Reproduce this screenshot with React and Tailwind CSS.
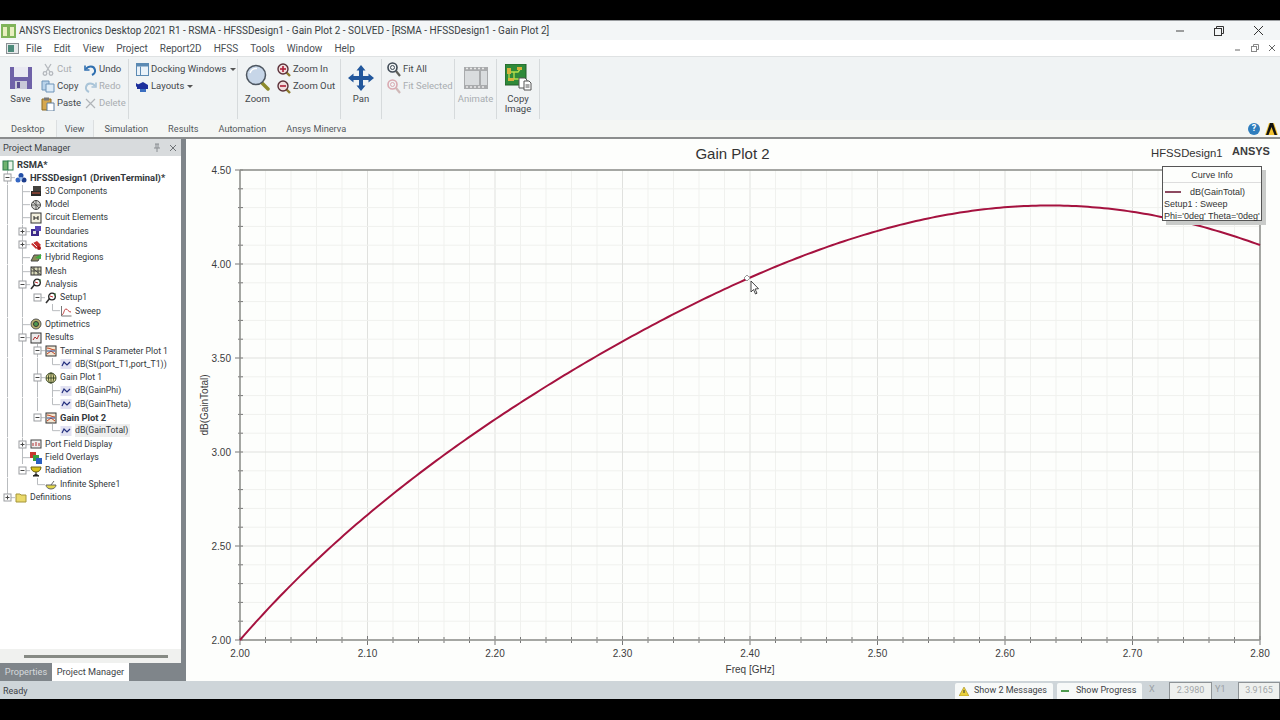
import { Fragment } from "react"

const ui = "font-['Roboto','Noto_Sans',sans-serif]"

// ---------- ribbon icons ----------
const SaveIcon = () => (
  <svg width="24" height="24" viewBox="0 0 24 24">
    <path d="M1 1h22v22H1z" fill="#6f62a8" />
    <rect x="5" y="1" width="14" height="10" fill="#e9e9f2" />
    <rect x="6" y="15" width="12" height="8" fill="#c9c9d8" />
    <rect x="8" y="16" width="3" height="6" fill="#5b4f90" />
  </svg>
)
const CutIcon = () => (
  <svg width="12" height="13" viewBox="0 0 12 13" fill="none" stroke="#b4b8bd" strokeWidth="1.3">
    <path d="M3 1l5 8M9 1L4 9" />
    <circle cx="3" cy="10.5" r="1.8" />
    <circle cx="9" cy="10.5" r="1.8" />
  </svg>
)
const UndoIcon = ({ off }) => (
  <svg width="13" height="12" viewBox="0 0 13 12" fill="none" stroke={off ? "#a9c4d8" : "#2f6fb0"} strokeWidth="2">
    <path d="M2 5c2-3 8-4 9 1 .4 2-1 4-3 5" />
    <path d="M1 1.5v4.5h4.500" strokeWidth="1.600" />
  </svg>
)
const RedoIcon = () => (
  <svg width="13" height="12" viewBox="0 0 13 12" fill="none" stroke="#a9c4d8" strokeWidth="2">
    <path d="M11 5C9 2 3 1 2 6c-.4 2 1 4 3 5" />
    <path d="M12 1.500V6H7.500" strokeWidth="1.600" />
  </svg>
)
const CopyIcon = () => (
  <svg width="14" height="13" viewBox="0 0 14 13">
    <path d="M1 1h7v9H1z" fill="#b9d3ea" stroke="#6c93b8" />
    <path d="M5 4h8v8H5z" fill="#dcebf7" stroke="#6c93b8" />
  </svg>
)
const PasteIcon = () => (
  <svg width="14" height="14" viewBox="0 0 14 14">
    <path d="M1 2h9v11H1z" fill="#d6a84f" stroke="#8b6a25" />
    <path d="M3 0.500h5v3H3z" fill="#777" />
    <path d="M6 6h7v8H6z" fill="#fff" stroke="#5f7f9f" />
  </svg>
)
const DeleteIcon = () => (
  <svg width="11" height="11" viewBox="0 0 11 11" stroke="#b0b4b8" strokeWidth="1.200">
    <path d="M1 1l9 9M10 1l-9 9" />
  </svg>
)
const DockIcon = () => (
  <svg width="13" height="13" viewBox="0 0 13 13">
    <rect x="0.500" y="0.500" width="12" height="12" fill="#eaf2f9" stroke="#5c8ab3" />
    <rect x="0.500" y="0.500" width="12" height="3" fill="#5c8ab3" />
    <path d="M4.500 3.500v9" stroke="#5c8ab3" />
  </svg>
)
const LayoutIcon = () => (
  <svg width="13" height="12" viewBox="0 0 13 12">
    <path d="M1 4l6-3 5 3v4H1z" fill="#1c2f9c" />
    <path d="M4 8h6v3H4z" fill="#3a6ec0" />
    <path d="M0 2l3 2-3 2z" fill="#1c2f9c" />
  </svg>
)
const ZoomIcon = () => (
  <svg width="26" height="27" viewBox="0 0 26 27">
    <path d="M16 18l7 7" stroke="#8c8a2c" strokeWidth="3.500" strokeLinecap="round" />
    <circle cx="11" cy="11" r="9.500" fill="#c7d6e8" stroke="#4d5660" strokeWidth="1.500" />
    <path d="M5 9c1-3 4-5 7-4.500" stroke="#fff" strokeWidth="1.500" fill="none" />
  </svg>
)
const ZoomSmall = ({ minus }) => (
  <svg width="14" height="14" viewBox="0 0 14 14">
    <path d="M9 9l4 4" stroke="#8c7a2c" strokeWidth="2.400" />
    <circle cx="6" cy="6" r="5" fill="#f1dede" stroke="#5a3038" strokeWidth="1.400" />
    <path d="M3 6h6" stroke="#b01e38" strokeWidth="1.600" />
    {!minus && <path d="M6 3v6" stroke="#b01e38" strokeWidth="1.600" />}
  </svg>
)
const PanIcon = () => (
  <svg width="26" height="26" viewBox="0 0 26 26" fill="#22579c">
    <path d="M13 0l4.500 5.500H15V11h5.500V8.500L26 13l-5.500 4.500V15H15v5.500h2.500L13 26l-4.500-5.500H11V15H5.500v2.500L0 13l5.500-4.500V11H11V5.500H8.500z" />
  </svg>
)
const FitIcon = ({ off }) => (
  <svg width="14" height="15" viewBox="0 0 14 15" fill="none">
    <path d="M9 9l4 5" stroke={off ? "#d0b8b8" : "#60605a"} strokeWidth="2.200" />
    <circle cx="5.500" cy="5.500" r="4.500" stroke={off ? "#d9a9b0" : "#3f4a55"} strokeWidth="1.600" />
    <circle cx="5.500" cy="5.500" r="2" stroke={off ? "#d9a9b0" : "#3f4a55"} />
  </svg>
)
const AnimateIcon = () => (
  <svg width="24" height="22" viewBox="0 0 24 22">
    <rect width="24" height="22" fill="#a9abad" />
    <rect x="1" y="4" width="14" height="14" fill="#d9dcde" />
    <rect x="17" y="4" width="6" height="14" fill="#d9dcde" />
    <path d="M2 1.500h20M2 20h20" stroke="#e9e9e9" strokeWidth="1.600" strokeDasharray="2 2" />
  </svg>
)
const CopyImageIcon = () => (
  <svg width="27" height="27" viewBox="0 0 27 27">
    <rect width="21" height="21" fill="#2f8a3a" stroke="#235f2a" />
    <path d="M4 4v13M4 8h9l3-4M9 8v7h8" stroke="#b7e04a" strokeWidth="1.300" fill="none" />
    <rect x="2" y="4" width="4" height="6" fill="#d9b13c" />
    <rect x="12" y="3" width="5" height="3" fill="#d9b13c" />
    <rect x="3" y="14" width="6" height="3" fill="#d9b13c" />
    <path d="M14 14h6l2 2v8h-8z" fill="#fff" stroke="#555" />
    <path d="M19 17h5l2 2v7h-7z" fill="#fff" stroke="#555" />
    <path d="M20.500 21h4M20.500 23h4" stroke="#555" />
  </svg>
)

const Caret = () => <span className="ml-[1px] w-0 h-0 border-x-[3px] border-x-transparent border-t-[3px] border-t-[#555]" />

const SmallBtn = ({ icon, label, off, caret, w }) => (
  <div className={`flex items-center gap-[2px] h-[17px] text-[9.500px] whitespace-nowrap ${w} ${off ? "text-[#a9adb1]" : "text-[#44484c]"}`}>
    <span className="w-[14px] flex justify-center shrink-0">{icon}</span>
    <span>{label}</span>
    {caret && <Caret />}
  </div>
)

const BigBtn = ({ icon, label, off, w }) => (
  <div className={`flex flex-col items-center pt-[5px] text-[9.500px] leading-[10px] shrink-0 ${w} ${off ? "text-[#a9adb1]" : "text-[#44484c]"}`}>
    <div className="h-[27px] flex items-center">{icon}</div>
    <div className="mt-[3px] text-center">{label}</div>
  </div>
)

const Group = ({ w, className = "", children }) => (
  <div className={`flex h-[60px] border-r border-[#d6dadc] shrink-0 ${w} ${className}`}>{children}</div>
)

const Col = ({ w, children }) => <div className={`flex flex-col pt-[2px] shrink-0 ${w}`}>{children}</div>

// ---------- tree ----------
const ROOT = 7.5, DES = 22.5, L2 = 37.5, L3 = 52.5

const rows = [
  { x: 2, text: "RSMA*", icon: "project", bold: true },
  { x: 15, text: "HFSSDesign1 (DrivenTerminal)*", icon: "design", bold: true, exp: ROOT, v: [ROOT] },
  { x: 30, text: "3D Components", icon: "comp", v: [ROOT, DES], h: DES },
  { x: 30, text: "Model", icon: "model", v: [ROOT, DES], h: DES },
  { x: 30, text: "Circuit Elements", icon: "circuit", v: [ROOT, DES], h: DES },
  { x: 30, text: "Boundaries", icon: "bound", v: [ROOT, DES], exp: DES },
  { x: 30, text: "Excitations", icon: "excite", v: [ROOT, DES], exp: DES },
  { x: 30, text: "Hybrid Regions", icon: "hybrid", v: [ROOT, DES], h: DES },
  { x: 30, text: "Mesh", icon: "mesh", v: [ROOT, DES], h: DES },
  { x: 30, text: "Analysis", icon: "analysis", v: [ROOT, DES], exp: DES },
  { x: 45, text: "Setup1", icon: "analysis", v: [ROOT, DES], exp: L2 },
  { x: 60, text: "Sweep", icon: "sweep", v: [ROOT, DES], elbow: L3 },
  { x: 30, text: "Optimetrics", icon: "opti", v: [ROOT, DES], h: DES },
  { x: 30, text: "Results", icon: "results", v: [ROOT, DES], exp: DES },
  { x: 45, text: "Terminal S Parameter Plot 1", icon: "plot", v: [ROOT, DES, L2], exp: L2 },
  { x: 60, text: "dB(St(port_T1,port_T1))", icon: "trace", v: [ROOT, DES, L2], elbow: L3 },
  { x: 45, text: "Gain Plot 1", icon: "globe", v: [ROOT, DES, L2], exp: L2 },
  { x: 60, text: "dB(GainPhi)", icon: "trace", v: [ROOT, DES, L2, L3], h: L3 },
  { x: 60, text: "dB(GainTheta)", icon: "trace", v: [ROOT, DES, L2], elbow: L3 },
  { x: 45, text: "Gain Plot 2", icon: "plot", bold: true, v: [ROOT, DES], exp: L2 },
  { x: 60, text: "dB(GainTotal)", icon: "trace", v: [ROOT, DES], elbow: L3, active: true },
  { x: 30, text: "Port Field Display", icon: "port", v: [ROOT, DES], exp: DES },
  { x: 30, text: "Field Overlays", icon: "overlay", v: [ROOT, DES], h: DES },
  { x: 30, text: "Radiation", icon: "radiation", v: [ROOT], exp: DES },
  { x: 45, text: "Infinite Sphere1", icon: "sphere", v: [ROOT], elbow: L2 },
  { x: 15, text: "Definitions", icon: "folder", exp: ROOT, top: true },
]

const TreeIcon = ({ name }) => {
  const shapes = {
    project: <><rect x="1" y="2" width="5" height="9" fill="#6fb36f" stroke="#2f7f4f" /><rect x="6" y="2" width="5" height="9" fill="#eaf5ea" stroke="#2f7f4f" /></>,
    design: <><circle cx="6" cy="3.500" r="2.500" fill="#2450a8" /><circle cx="3" cy="8" r="2.500" fill="#3567c4" /><circle cx="9" cy="8" r="2.500" fill="#1c3c8c" /><circle cx="6" cy="6.500" r="1.500" fill="#9ec0ee" /></>,
    comp: <><rect x="3" y="1" width="8" height="5" fill="#44423e" /><rect x="1" y="6" width="10" height="5" fill="#2a2a28" /><path d="M2 8h8" stroke="#c9533a" /></>,
    model: <><circle cx="6" cy="6" r="4.500" fill="#d3d3d0" stroke="#4a4a48" /><path d="M6 1v10M1.500 6h9M3 3l6 6" stroke="#4a4a48" strokeWidth=".8" /></>,
    circuit: <><rect x="1" y="1" width="10" height="10" fill="#f4f1df" stroke="#333" /><path d="M4 4v4M8 4v4M4 6h4" stroke="#222" /></>,
    bound: <><rect x="1" y="4" width="8" height="7" fill="#3c2a88" /><rect x="5" y="1" width="6" height="5" fill="#5846b5" /><rect x="3" y="6" width="3" height="3" fill="#ddd" /></>,
    excite: <><path d="M1 5l6-3 4 4-5 4z" fill="#c62e2e" /><path d="M3 4l5 5" stroke="#eee" /><circle cx="9" cy="9" r="2" fill="#a11" /></>,
    hybrid: <><path d="M1 9l3-6h7l-3 6z" fill="#8a8a5a" stroke="#444" /><path d="M5 6l6-4v5z" fill="#3fae3f" /></>,
    mesh: <><rect x="1" y="2" width="10" height="8" fill="#d8d8b8" stroke="#333" /><path d="M1 6h10M4 2v8M8 2v8M1 2l10 8" stroke="#333" strokeWidth=".8" /></>,
    analysis: <><path d="M1 11l4-5" stroke="#333" strokeWidth="1.600" /><circle cx="7" cy="4.500" r="3.300" fill="#fff" stroke="#222" strokeWidth="1.300" /><path d="M5 4l3 1" stroke="#c62e2e" /><path d="M10 1v3" stroke="#3b7d3b" /></>,
    sweep: <><path d="M1.500 1v10h10" stroke="#777" fill="none" /><path d="M2 10c2-1 2-6 4-6s2 3 5 3" stroke="#c03a3a" fill="none" /></>,
    opti: <><circle cx="6" cy="6" r="5" fill="#b8b070" stroke="#555" /><circle cx="6" cy="6" r="2.500" fill="#4f9a4f" stroke="#333" /></>,
    results: <><rect x="1" y="1" width="10" height="10" fill="#ececec" stroke="#333" /><path d="M3 8l2-3 2 2 2-4" stroke="#b03030" fill="none" /></>,
    plot: <><rect x="1" y="1" width="10" height="10" fill="#f3e7d3" stroke="#333" /><path d="M2 3c3 0 5 2 8 2M2 9l4-3 4 3" stroke="#c6421f" fill="none" /><path d="M2 6h8" stroke="#2450a8" /></>,
    trace: <><rect x=".5" y="1" width="11" height="10" fill="#e2e2f2" /><path d="M2 8l2-4 3 3 3-3" stroke="#24307f" strokeWidth="1.200" fill="none" /></>,
    globe: <><circle cx="6" cy="6" r="5" fill="#e7df9c" stroke="#3c4a2a" /><path d="M6 1v10M1 6h10" stroke="#3c4a2a" /><ellipse cx="6" cy="6" rx="2.500" ry="5" fill="none" stroke="#3c4a2a" /></>,
    port: <><rect x="1" y="2" width="10" height="8" fill="#eee" stroke="#444" /><path d="M3 8V5M6 8V4M9 8V5" stroke="#b03030" /></>,
    overlay: <><rect x="0" y="0" width="6" height="6" fill="#c9392f" /><rect x="3" y="3" width="6" height="6" fill="#3aa041" /><rect x="6" y="6" width="6" height="6" fill="#2a5fc0" /></>,
    radiation: <><path d="M1 2h10c0 3-2 5-5 5S1 5 1 2z" fill="#d7c21e" stroke="#6e6410" /><path d="M6 7v2M3 11l3-2 3 2z" stroke="#222" fill="#222" /></>,
    sphere: <><path d="M1 7h10c0 2-2 4-5 4S1 9 1 7z" fill="#e2d64a" stroke="#666" /><path d="M6 7l3-4" stroke="#666" /></>,
    folder: <><path d="M1 3h4l1 1h5v7H1z" fill="#ead96a" stroke="#a4953a" /></>,
  }
  return (
    <svg width="12" height="12" viewBox="0 0 12 12" className="shrink-0">
      {shapes[name]}
    </svg>
  )
}

const Guides = ({ row }) => {
  const { x, v = [], h, elbow, exp, top } = row
  return (
    <svg width={x} height="13.32" viewBox={`0 0 ${x} 13.32`} className="shrink-0">
      <g stroke="#b9bcbf" strokeWidth="1" fill="none">
        {v.map((g) => (
          <path key={g} d={`M${g} 0V13.32`} />
        ))}
        {h && <path d={`M${h} 6.660H${x}`} />}
        {elbow && <path d={`M${elbow} 0V6.660H${x}`} />}
        {exp && <path d={`M${exp} 6.660H${x}`} />}
        {top && <path d={`M${exp} 0V6.660`} />}
      </g>
      {exp && (
        <g>
          <rect x={exp - 3.5} y="3" width="7" height="7" fill="#fff" stroke="#9a9da0" />
          <path d={`M${exp - 2} 6.500h4`} stroke="#444" />
          {["Boundaries", "Excitations", "Port Field Display", "Definitions"].includes(row.text) && (
            <path d={`M${exp} 4.500v4`} stroke="#444" />
          )}
        </g>
      )}
    </svg>
  )
}

const TreeRow = ({ row }) => (
  <div className="flex items-center h-[13.32px] whitespace-nowrap">
    <Guides row={row} />
    <TreeIcon name={row.icon} />
    <span
      className={`ml-[3px] leading-[13px] text-[#33383c] ${row.bold ? "font-bold text-[9.400px]" : "text-[8.700px]"} ${row.active ? "bg-[#eeeeee] pr-[2px]" : ""}`}
    >
      {row.text}
    </span>
  </div>
)

// ---------- chart ----------
const anchors = [
  [240, 640], [369.3, 513.3], [496.7, 418.3], [630, 337.3], [878.3, 230.7], [1055, 205.5], [1260, 245],
]

// smooth curve through the measured anchors
const gainAt = (x) =>
  anchors.reduce((sum, [xi, yi], i) => {
    let term = yi
    anchors.forEach(([xj], j) => {
      if (j !== i) term *= (x - xj) / (xi - xj)
    })
    return sum + term
  }, 0)

const curvePath = () => {
  const pts = []
  for (let x = 240; x <= 1260; x += 4) pts.push(`${x} ${gainAt(x).toFixed(2)}`)
  return `M${pts.join("L")}`
}

const xTicks = Array.from({ length: 41 }, (_, i) => 240 + i * 25.5)
const yTicks = Array.from({ length: 26 }, (_, i) => 170 + i * 18.8)

const Chart = () => (
  <svg
    viewBox="186 139 1094 542"
    width="1094"
    height="542"
    className="block font-['Liberation_Sans',Arial,sans-serif]"
  >
    <rect x="186" y="139" width="1094" height="542" fill="#fdfefc" />
    {xTicks.map((x, i) => (
      <Fragment key={x}>
        <path d={`M${x} 170V640`} stroke={i % 5 === 0 ? "#e0e1de" : "#f0f1ee"} />
        <path d={`M${x} ${i % 5 === 0 ? 636 : 637}V${i % 5 === 0 ? 645 : 643}`} stroke="#777" />
      </Fragment>
    ))}
    {yTicks.map((y, i) => (
      <Fragment key={y}>
        <path d={`M240 ${y}H1260`} stroke={i % 5 === 0 ? "#e0e1de" : "#f0f1ee"} />
        <path d={`M${i % 5 === 0 ? 235 : 238} ${y}H243`} stroke="#777" />
      </Fragment>
    ))}
    <path d="M240 170H1260M240 640H1260" stroke="#8d8e8a" strokeWidth="1.500" />
    <path d="M240 170V640M1260 170V640" stroke="#8d8e8a" strokeWidth="1.500" />
    <path d={curvePath()} fill="none" stroke="#a5123f" strokeWidth="2" />
    <path d="M747 275l3 3-3 3-3-3z" fill="#fff" stroke="#999" />
    <path d="M751 281v11l2.500-2.500 2 4.500 1.500-.8-2-4.200 3.500-.3z" fill="#fff" stroke="#333" strokeWidth=".9" />

    <g fill="#3c3c3c" fontSize="10">
      {["4.50", "4.00", "3.50", "3.00", "2.50", "2.00"].map((t, i) => (
        <text key={t} x="231" y={173.500 + i * 94} textAnchor="end">{t}</text>
      ))}
      {["2.00", "2.10", "2.20", "2.30", "2.40", "2.50", "2.60", "2.70", "2.80"].map((t, i) => (
        <text key={t} x={240 + i * 127.5} y="656.500" textAnchor="middle">{t}</text>
      ))}
      <text x="750" y="672.500" textAnchor="middle">Freq [GHz]</text>
      <text transform="translate(208 405) rotate(-90)" textAnchor="middle">dB(GainTotal)</text>
    </g>
    <text x="732.500" y="158.500" textAnchor="middle" fontSize="15" fill="#333">Gain Plot 2</text>
    <text x="1151" y="157" fontSize="11.300" fill="#333">HFSSDesign1</text>
    <text x="1232" y="155" fontSize="11" fontWeight="700" fill="#3c3c3c">ANSYS</text>
  </svg>
)

const CurveInfo = () => (
  <div className="absolute left-[976px] top-[27px] w-[100px] h-[55px] bg-[#fdfefc] border border-[#555] shadow-[4px_4px_0_#c9cbc9] font-['Liberation_Sans',Arial,sans-serif] text-[9px] leading-[12px] text-[#333] whitespace-nowrap">
    <div className="h-[16px] border-b border-[#ddd] flex items-center justify-center">Curve Info</div>
    <div className="flex items-center h-[12px] mt-[3px] pl-[2px]">
      <span className="w-[16px] h-[2px] bg-[#8d4a60]" />
      <span className="ml-[9px]">dB(GainTotal)</span>
    </div>
    <div className="pl-[1px]">Setup1 : Sweep</div>
    <div className="pl-[1px]">{"Phi='0deg' Theta='0deg'"}</div>
  </div>
)

const tabs = ["Desktop", "View", "Simulation", "Results", "Automation", "Ansys Minerva"]
const menus = ["File", "Edit", "View", "Project", "Report2D", "HFSS", "Tools", "Window", "Help"]

export default function App() {
  return (
    <div className={`w-[1280px] h-[720px] bg-black overflow-hidden flex flex-col ${ui}`}>
      <div className="h-[20px] shrink-0" />

      {/* title bar */}
      <div className="h-[20px] shrink-0 bg-[#f3f6f7] border-t border-[#9a9da0] flex items-center text-[10px] text-[#3a3f44] whitespace-nowrap">
        <svg width="15" height="14" viewBox="0 0 15 14" className="ml-[1px] mr-[3px]">
          <rect width="15" height="14" fill="#7fb45a" />
          <rect x="2" y="3" width="4" height="9" fill="#e8efc0" />
          <rect x="9" y="3" width="4" height="9" fill="#e8efc0" />
        </svg>
        <span>ANSYS Electronics Desktop 2021 R1 - RSMA - HFSSDesign1 - Gain Plot 2 - SOLVED - [RSMA - HFSSDesign1 - Gain Plot 2]</span>
        <div className="ml-auto flex items-center">
          <svg width="10" height="10" viewBox="0 0 10 10" className="mr-[29px]"><path d="M1 5h8" stroke="#444" /></svg>
          <svg width="10" height="10" viewBox="0 0 10 10" fill="none" stroke="#333" className="mr-[29px]"><rect x=".5" y="2.500" width="7" height="7" /><path d="M2.500 2.500V.5h7v7H7.500" /></svg>
          <svg width="11" height="11" viewBox="0 0 11 11" stroke="#333" className="mr-[16px]"><path d="M1 1l9 9M10 1l-9 9" /></svg>
        </div>
      </div>

      {/* menu bar */}
      <div className="h-[16px] shrink-0 bg-white flex items-center text-[10px] text-[#4a4f54] whitespace-nowrap">
        <svg width="13" height="11" viewBox="0 0 13 11" className="ml-[6px] mr-[7px]">
          <rect x=".5" y=".5" width="12" height="10" fill="#e6e9ea" stroke="#8a9094" />
          <rect x="2" y="2" width="6" height="7" fill="#4d8a7a" />
        </svg>
        <div className="flex gap-[12px]">
          {menus.map((m) => (
            <span key={m}>{m}</span>
          ))}
        </div>
        <div className="ml-auto flex items-center text-[#777]">
          <svg width="8" height="8" viewBox="0 0 8 8" className="mr-[9px]"><path d="M1 6h5" stroke="#666" /></svg>
          <svg width="8" height="8" viewBox="0 0 8 8" fill="none" stroke="#888" className="mr-[9px]"><rect x=".5" y="2.500" width="5" height="5" /><path d="M2.500 2.500V.5h5v5h-2" /></svg>
          <svg width="8" height="8" viewBox="0 0 8 8" stroke="#666" className="mr-[4px]"><path d="M1 1l6 6M7 1L1 7" /></svg>
        </div>
      </div>

      {/* ribbon */}
      <div className="h-[64px] shrink-0 bg-[#f0f3f4] border-t border-[#dfe2e3] flex items-start pt-[2px]">
        <Group w="w-[129px]">
          <BigBtn w="w-[41px]" icon={<SaveIcon />} label="Save" />
          <Col w="w-[42px]">
            <SmallBtn icon={<CutIcon />} label="Cut" off />
            <SmallBtn icon={<CopyIcon />} label="Copy" />
            <SmallBtn icon={<PasteIcon />} label="Paste" />
          </Col>
          <Col w="w-[45px]">
            <SmallBtn icon={<UndoIcon />} label="Undo" />
            <SmallBtn icon={<RedoIcon />} label="Redo" off />
            <SmallBtn icon={<DeleteIcon />} label="Delete" off />
          </Col>
        </Group>
        <Group w="w-[109px]" className="pl-[6px]">
          <Col w="w-[100px]">
            <SmallBtn icon={<DockIcon />} label="Docking Windows" caret />
            <SmallBtn icon={<LayoutIcon />} label="Layouts" caret />
          </Col>
        </Group>
        <Group w="w-[103px]">
          <BigBtn w="w-[39px]" icon={<ZoomIcon />} label="Zoom" />
          <Col w="w-[60px]">
            <SmallBtn icon={<ZoomSmall />} label="Zoom In" />
            <SmallBtn icon={<ZoomSmall minus />} label="Zoom Out" />
          </Col>
        </Group>
        <Group w="w-[41px]">
          <BigBtn w="w-[40px]" icon={<PanIcon />} label="Pan" />
        </Group>
        <Group w="w-[73px]" className="pl-[5px]">
          <Col w="w-[67px]">
            <SmallBtn icon={<FitIcon />} label="Fit All" />
            <SmallBtn icon={<FitIcon off />} label="Fit Selected" off />
          </Col>
        </Group>
        <Group w="w-[42px]">
          <BigBtn w="w-[41px]" icon={<AnimateIcon />} label="Animate" off />
        </Group>
        <Group w="w-[43px]">
          <BigBtn w="w-[42px]" icon={<CopyImageIcon />} label={<>Copy<br />Image</>} />
        </Group>
      </div>

      {/* ribbon tabs */}
      <div className="h-[19px] shrink-0 bg-[#f4f6f4] border-b-2 border-[#8b8d8d] flex items-center text-[9.200px] text-[#555a5e] whitespace-nowrap">
        <div className="flex items-center ml-[11px] h-full">
          {tabs.map((t) => (
            <span
              key={t}
              className={`h-full flex items-center ${t === "View" ? "bg-[#eef2f3] border-x border-[#dcdfe0] px-[8px] -ml-[9px] mr-[11px]" : "mr-[20px]"}`}
            >
              {t}
            </span>
          ))}
        </div>
        <div className="ml-auto mr-[2px] flex items-center gap-[5px]">
          <span className="w-[12px] h-[12px] rounded-full bg-[#2f7dbd] text-white text-[9px] font-bold flex items-center justify-center">?</span>
          <svg width="13" height="13" viewBox="0 0 13 13">
            <path d="M4 1h5l4 12H0z" fill="#f2c230" />
            <path d="M1 13L5 1h3l4 12H9.500L6.500 5 3.500 13z" fill="#111" />
          </svg>
        </div>
      </div>

      {/* main */}
      <div className="h-[542px] shrink-0 flex">
        <div className="w-[186px] shrink-0 bg-[#7f858a] flex flex-col">
          <div className="w-[181px] flex-1 min-h-0 bg-white flex flex-col">
            <div className="h-[17px] shrink-0 bg-[#d8dbdd] flex items-center px-[3px] text-[9.200px] text-[#3e4347]">
              <span>Project Manager</span>
              <svg width="8" height="9" viewBox="0 0 8 9" stroke="#8a8e92" className="ml-auto mr-[8px]"><path d="M2 1h4M3 1v4M5 1v4M1 5h6M4 5v4" /></svg>
              <svg width="8" height="8" viewBox="0 0 8 8" stroke="#6e7276" className="mr-[1px]"><path d="M1 1l6 6M7 1L1 7" /></svg>
            </div>
            <div className="flex-1 min-h-0 pt-[2px]">
              {rows.map((r) => (
                <TreeRow key={r.text} row={r} />
              ))}
            </div>
            <div className="h-[14px] shrink-0 bg-[#f0f1ef] flex items-center">
              <div className="ml-[24px] w-[144px] h-[3px] bg-[#868a84]" />
            </div>
          </div>
          <div className="h-[18px] shrink-0 flex items-stretch text-[9.200px] whitespace-nowrap">
            <span className="w-[52px] flex items-center justify-center text-[#d5d9dc]">Properties</span>
            <span className="w-[77px] bg-white flex items-center justify-center text-[#3e4347]">Project Manager</span>
          </div>
        </div>
        <div className="relative flex-1 min-w-0">
          <Chart />
          <CurveInfo />
        </div>
      </div>

      {/* status bar */}
      <div className="h-[18px] shrink-0 bg-[#ced5d9] flex items-center text-[9px] text-[#3e4347] whitespace-nowrap">
        <span className="ml-[3px] pt-[4px]">Ready</span>
        <div className="ml-auto flex items-center h-full">
          <div className="w-[98px] h-[16px] bg-[#f7f9f8] rounded-t-[2px] flex items-center pl-[4px] mt-[2px]">
            <svg width="10" height="9" viewBox="0 0 10 9" className="mr-[5px]"><path d="M5 0l5 9H0z" fill="#e8cf3a" stroke="#a18a1c" strokeWidth=".6" /><path d="M5 3v3" stroke="#333" /></svg>
            <span>Show 2 Messages</span>
          </div>
          <div className="w-[85px] h-[16px] bg-[#f7f9f8] rounded-t-[2px] flex items-center pl-[4px] ml-[4px] mt-[2px]">
            <span className="w-[8px] h-[2px] bg-[#4f9a4f] mr-[7px]" />
            <span>Show Progress</span>
          </div>
          <span className="ml-[7px] w-[20px] text-[#9aa0a4]">X</span>
          <div className="w-[43px] h-[17px] mt-[1px] bg-[#eef0ee] border border-[#8e9396] border-b-0 text-[#a2a6a8] flex items-center justify-center">2.3980</div>
          <span className="w-[26px] pl-[3px] text-[#9aa0a4]">Y1</span>
          <div className="w-[42px] h-[17px] mt-[1px] bg-[#eef0ee] border border-[#8e9396] border-b-0 text-[#a2a6a8] flex items-center justify-center">3.9165</div>
        </div>
      </div>

      <div className="flex-1 min-h-0" />
    </div>
  )
}
